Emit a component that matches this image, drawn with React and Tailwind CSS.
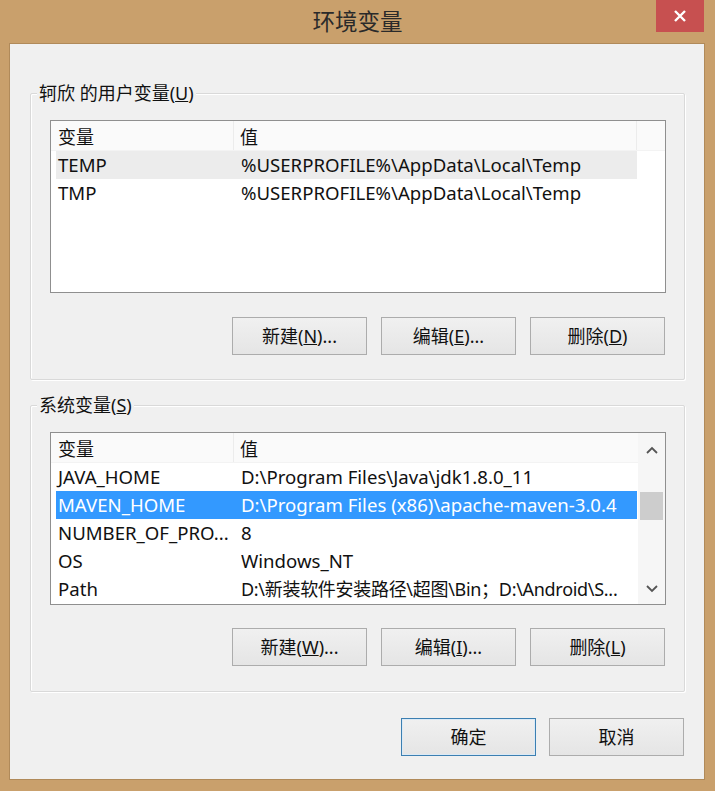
import React from "react";

const F = "font-['Noto_Sans','Noto_Sans_CJK_SC',sans-serif]";

function Btn({ children, primary, className = "" }) {
  return (
    <div
      className={`w-[135px] h-[38px] flex items-center justify-center text-[18px] text-[#111] border bg-gradient-to-b from-[#f0f0f0] to-[#e5e5e5] ${
        primary ? "border-[#3c7fb1] shadow-[inset_0_0_0_1px_#dbeaf6]" : "border-[#acacac]"
      } ${className}`}
    >
      {children}
    </div>
  );
}

function Chevron({ up }) {
  return (
    <svg width="12" height="8" viewBox="0 0 12 8">
      <path
        d={up ? "M1 7 L6 2 L11 7" : "M1 1 L6 6 L11 1"}
        fill="none"
        stroke="#555"
        strokeWidth="1.8"
      />
    </svg>
  );
}

function Row({ name, value, state, valueClass = "" }) {
  const bg =
    state === "sel" ? "bg-[#3399ff] text-white" : state === "hover" ? "bg-[#ececec]" : "";
  return (
    <div className={`flex h-[28px] items-center ml-[5px] w-[581px] text-[18.6px] whitespace-nowrap ${bg}`}>
      <div className="w-[185px] pl-[2px] overflow-hidden">{name}</div>
      <div className={`flex-1 overflow-hidden ${valueClass}`}>{value}</div>
    </div>
  );
}

function Header({ extra }) {
  return (
    <div className="flex h-[30px] items-center text-[18px] bg-[#fafafa] border-b border-[#f3f3f3]">
      <div className="w-[183px] h-full flex items-center pl-[7px] pt-[3px] border-r border-[#ececec]">变量</div>
      {extra ? (
        <>
          <div className="w-[403px] h-full flex items-center pl-[6px] pt-[3px] border-r border-[#ececec]">值</div>
          <div className="flex-1 h-full"></div>
        </>
      ) : (
        <div className="flex-1 h-full flex items-center pl-[6px] pt-[3px]">值</div>
      )}
    </div>
  );
}

function GroupBox({ label, className = "", children }) {
  return (
    <div
      className={`relative ml-[20px] w-[655px] border border-[#d9d9d9] shadow-[inset_1px_1px_0_#ffffff,1px_1px_0_#ffffff] rounded-[2px] ${className}`}
    >
      <span className="absolute left-[6px] -top-[13px] px-[2px] bg-[#f0f0f0] text-[18px] leading-[24px] text-[#111]">
        {label}
      </span>
      {children}
    </div>
  );
}

export default function App() {
  return (
    <div className={`w-[715px] h-[791px] bg-[#c9a06c] pl-[9px] pr-[10px] pt-[43px] pb-[11px] relative ${F} text-[#111]`}>
      {/* title */}
      <div className="absolute left-0 top-0 w-full h-[43px] flex items-center justify-center text-[22.5px] text-[#2a2a2a]">
        环境变量
      </div>
      <div className="absolute left-[656px] top-0 w-[48px] h-[32px] bg-[#c75050] flex items-center justify-center">
        <svg width="14" height="14" viewBox="0 0 14 14">
          <path d="M2 2 L12 12 M12 2 L2 12" stroke="#fff" strokeWidth="2.4" />
        </svg>
      </div>

      <div className="w-[696px] h-[737px] border border-[#b08a5a] bg-[#f0f0f0] flex flex-col">
        {/* user variables */}
        <GroupBox label={<>轲欣 的用户变量(<u>U</u>)</>} className="mt-[49px]">
          <div className="ml-[19px] mt-[26px] w-[616px] h-[173px] border border-[#8f8f8f] bg-white">
            <Header extra />
            <Row name="TEMP" value="%USERPROFILE%\AppData\Local\Temp" state="hover" />
            <Row name="TMP" value="%USERPROFILE%\AppData\Local\Temp" />
          </div>
          <div className="flex justify-end gap-[14px] pr-[19px] mt-[24px] mb-[24px]">
            <Btn>新建(<u>N</u>)...</Btn>
            <Btn>编辑(<u>E</u>)...</Btn>
            <Btn>删除(<u>D</u>)</Btn>
          </div>
        </GroupBox>

        {/* system variables */}
        <GroupBox label={<>系统变量(<u>S</u>)</>} className="mt-[25px]">
          <div className="ml-[19px] mt-[26px] w-[616px] h-[173px] border border-[#8f8f8f] bg-white flex">
            <div className="w-[587px]">
              <Header />
              <Row name="JAVA_HOME" value="D:\Program Files\Java\jdk1.8.0_11" />
              <Row name="MAVEN_HOME" value="D:\Program Files (x86)\apache-maven-3.0.4" state="sel" />
              <Row name="NUMBER_OF_PRO..." value="8" />
              <Row name="OS" value="Windows_NT" />
              <Row
                name="Path"
                value="D:\新装软件安装路径\超图\Bin；D:\Android\S..."
                valueClass="text-[18px] tracking-[-0.3px]"
              />
            </div>
            <div className="flex-1 bg-[#f6f6f6] flex flex-col items-center">
              <div className="h-[30px] flex items-center pt-[4px]">
                <Chevron up />
              </div>
              <div className="h-[29px]"></div>
              <div className="w-[23px] h-[28px] bg-[#cdcdcd]"></div>
              <div className="flex-1"></div>
              <div className="h-[28px] flex items-center pb-[2px]">
                <Chevron />
              </div>
            </div>
          </div>
          <div className="flex justify-end gap-[14px] pr-[19px] mt-[23px] mb-[25px]">
            <Btn>新建(<u>W</u>)...</Btn>
            <Btn>编辑(<u>I</u>)...</Btn>
            <Btn>删除(<u>L</u>)</Btn>
          </div>
        </GroupBox>

        <div className="flex justify-end gap-[13px] pr-[20px] mt-[26px]">
          <Btn primary>确定</Btn>
          <Btn>取消</Btn>
        </div>
      </div>
    </div>
  );
}
